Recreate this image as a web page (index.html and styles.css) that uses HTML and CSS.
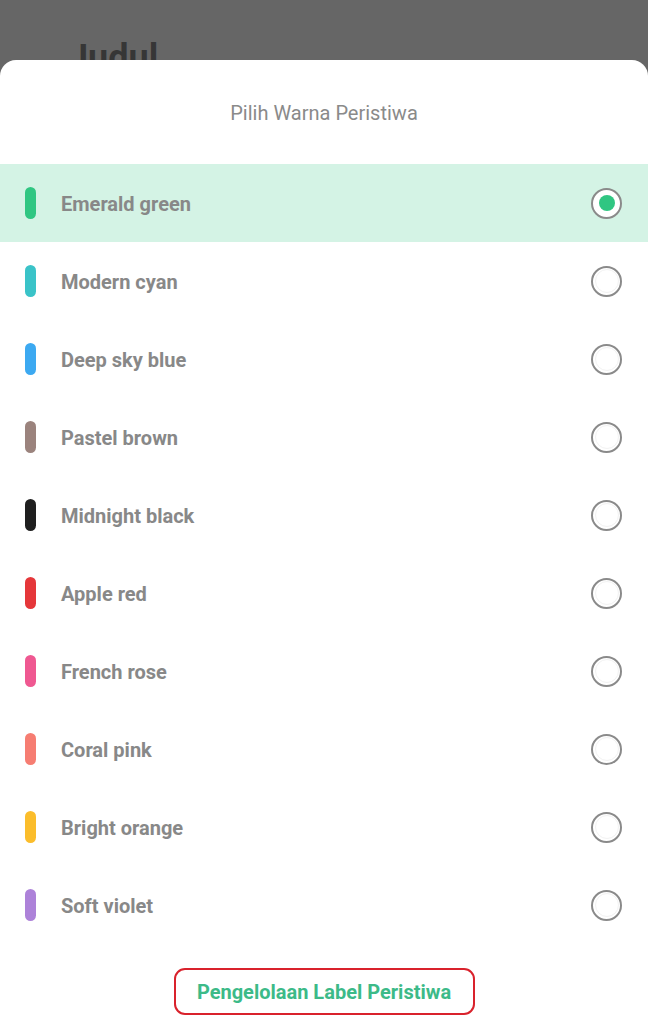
FILE: index.html
```
<!DOCTYPE html>
<html lang="id">
<head>
<meta charset="utf-8">
<link rel="stylesheet" href="styles.css">
</head>
<body>
<div class="backdrop">
  <div class="behind">Judul</div>
</div>
<div class="sheet">
  <div class="title">Pilih Warna Peristiwa</div>
  <ul class="list">
    <li class="row selected"><span class="bar" style="background:#30c682"></span><span class="label">Emerald green</span><span class="radio on"></span></li>
    <li class="row"><span class="bar" style="background:#3ac3c8"></span><span class="label">Modern cyan</span><span class="radio"></span></li>
    <li class="row"><span class="bar" style="background:#3ca9f1"></span><span class="label">Deep sky blue</span><span class="radio"></span></li>
    <li class="row"><span class="bar" style="background:#9b837d"></span><span class="label">Pastel brown</span><span class="radio"></span></li>
    <li class="row"><span class="bar" style="background:#1f1f1f"></span><span class="label">Midnight black</span><span class="radio"></span></li>
    <li class="row"><span class="bar" style="background:#e5373a"></span><span class="label">Apple red</span><span class="radio"></span></li>
    <li class="row"><span class="bar" style="background:#ef5891"></span><span class="label">French rose</span><span class="radio"></span></li>
    <li class="row"><span class="bar" style="background:#f67d72"></span><span class="label">Coral pink</span><span class="radio"></span></li>
    <li class="row"><span class="bar" style="background:#fbbd2b"></span><span class="label">Bright orange</span><span class="radio"></span></li>
    <li class="row"><span class="bar" style="background:#ad82d9"></span><span class="label">Soft violet</span><span class="radio"></span></li>
  </ul>
  <div class="footer">
    <button class="manage">Pengelolaan Label Peristiwa</button>
  </div>
</div>
</body>
</html>
```
FILE: styles.css
```
* { box-sizing: border-box; }
html, body {
  margin: 0;
  padding: 0;
  background: #666666;
  font-family: Roboto, "Noto Sans", "Liberation Sans", sans-serif;
  height: 1029px;
  overflow: hidden;
}
.backdrop {
  height: 60px;
  overflow: hidden;
  padding-left: 68px;
  padding-top: 38px;
}
.behind {
  font-size: 36px;
  font-weight: 700;
  color: #363636;
  line-height: 40px;
}
.sheet {
  background: #ffffff;
  border-radius: 16px 16px 0 0;
  height: 969px;
  display: flex;
  flex-direction: column;
}
.title {
  height: 104px;
  display: flex;
  align-items: center;
  justify-content: center;
  font-size: 20px;
  color: #8a8a8a;
  padding-top: 2px;
}
.list {
  list-style: none;
  margin: 0;
  padding: 0;
}
.row {
  height: 78px;
  display: flex;
  align-items: center;
  padding: 0 25px;
}
.row.selected { background: #d4f3e5; }
.bar {
  width: 11px;
  height: 32px;
  border-radius: 6px;
  flex: none;
}
.label {
  margin-left: 25px;
  font-size: 20px;
  font-weight: 700;
  color: #888888;
  flex: 1;
  padding-top: 1px;
}
.radio {
  width: 31px;
  height: 31px;
  border: 2px solid #8a8a8a;
  border-radius: 50%;
  flex: none;
  display: flex;
  align-items: center;
  justify-content: center;
  margin-right: 1px;
}
.radio::after {
  content: "";
  width: 22px;
  height: 22px;
  border-radius: 50%;
  border: 1px solid #f2f2f2;
}
.radio.on { background: #ffffff; }
.radio.on::after {
  width: 16px;
  height: 16px;
  border: none;
  background: #30c682;
}
.footer {
  display: flex;
  justify-content: center;
  padding-top: 24px;
}
.manage {
  width: 301px;
  height: 47px;
  border: 2px solid #d9222c;
  border-radius: 11px;
  background: #ffffff;
  font-family: Roboto, "Noto Sans", "Liberation Sans", sans-serif;
  font-size: 20px;
  font-weight: 700;
  color: #3cba88;
  padding: 0;
}
```
